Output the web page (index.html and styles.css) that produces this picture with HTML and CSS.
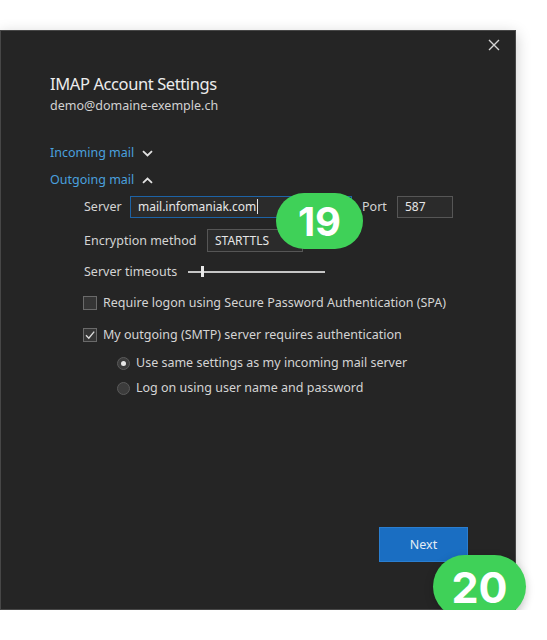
FILE: index.html
```html
<!DOCTYPE html>
<html lang="en">
<head>
    <meta charset="UTF-8">
    <meta name="viewport" content="width=device-width, initial-scale=1.0">
    <title>IMAP Account Settings</title>
    <link rel="stylesheet" href="styles.css">
</head>
<body>
    <div class="dialog">
        <button class="close" aria-label="Close">
            <svg width="12" height="12" viewBox="0 0 12 12">
                <path d="M1 1 L11 11 M11 1 L1 11" stroke="#d4d4d4" stroke-width="1.4" fill="none"/>
            </svg>
        </button>

        <div class="content">
            <h1 class="title">IMAP Account Settings</h1>
            <div class="email">demo@domaine-exemple.ch</div>

            <div class="toggle toggle-first">
                Incoming mail
                <svg width="11" height="7" viewBox="0 0 11 7"><path d="M1 1.2 L5.5 5.5 L10 1.2" stroke="#e2e2e2" stroke-width="1.8" fill="none"/></svg>
            </div>
            <div class="toggle">
                Outgoing mail
                <svg width="11" height="7" viewBox="0 0 11 7"><path d="M1 5.8 L5.5 1.5 L10 5.8" stroke="#e2e2e2" stroke-width="1.8" fill="none"/></svg>
            </div>

            <div class="fields">
                <div class="row row-server">
                    <span class="label label-server">Server</span>
                    <div class="field field-server">mail.infomaniak.com<span class="caret"></span></div>
                    <span class="label label-port">Port</span>
                    <div class="field field-port">587</div>
                </div>
                <div class="row row-enc">
                    <span class="label label-enc">Encryption method</span>
                    <div class="field field-select">STARTTLS</div>
                </div>
                <div class="row row-timeout">
                    <span class="label label-timeout">Server timeouts</span>
                    <div class="slider"><span class="thumb"></span></div>
                </div>

                <div class="check check-spa">
                    <span class="box"></span>
                    Require logon using Secure Password Authentication (SPA)
                </div>
                <div class="check check-auth">
                    <span class="box checked">
                        <svg width="12" height="12" viewBox="0 0 12 12"><path d="M2 6.3 L4.8 9.2 L10.2 2.6" stroke="#dcdcdc" stroke-width="1.4" fill="none"/></svg>
                    </span>
                    My outgoing (SMTP) server requires authentication
                </div>

                <div class="radios">
                    <div class="radio radio-first">
                        <span class="dot selected"></span>
                        Use same settings as my incoming mail server
                    </div>
                    <div class="radio">
                        <span class="dot"></span>
                        Log on using user name and password
                    </div>
                </div>
            </div>

            <div class="actions">
                <button class="btn-next">Next</button>
            </div>
        </div>

        <span class="badge badge-19">19</span>
        <span class="badge badge-20">20</span>
    </div>
</body>
</html>
```

FILE: styles.css
```css
body {
    margin: 0;
    background: #ffffff;
    font-family: "Noto Sans", "Open Sans", sans-serif;
    font-size: 12.5px;
    color: #d4d4d4;
}
.dialog {
    position: relative;
    box-sizing: border-box;
    width: 516px;
    height: 580px;
    margin-top: 30px;
    background: #252525;
    border: 1px solid #474747;
    box-shadow: 0 4px 14px rgba(0,0,0,0.22);
}
.close {
    position: absolute;
    top: 7px;
    right: 14px;
    width: 14px;
    height: 14px;
    padding: 1px;
    border: none;
    background: none;
}
.content {
    display: flex;
    flex-direction: column;
    height: 100%;
    box-sizing: border-box;
    padding: 41px 47px 47px 49px;
}
.title {
    margin: 0;
    font-size: 16.5px;
    letter-spacing: -0.4px;
    line-height: 24px;
    font-weight: normal;
    color: #ececec;
}
.email {
    margin-top: 1px;
    line-height: 18px;
    color: #d2d2d2;
}
.toggle {
    display: flex;
    align-items: center;
    gap: 8px;
    margin-top: 9px;
    line-height: 18px;
    font-size: 12.5px;
    color: #4aa0de;
}
.toggle-first {
    margin-top: 29px;
}
.fields {
    margin-top: 7px;
    padding-left: 34px;
}
.row {
    display: flex;
    align-items: center;
}
.row-enc {
    margin-top: 11px;
}
.row-timeout {
    margin-top: 11px;
    height: 18px;
}
.label {
    flex-shrink: 0;
    line-height: 18px;
}
.label-server { width: 46px; }
.label-port { width: 35px; margin-left: 10px; }
.label-enc { width: 123px; }
.label-timeout { width: 104px; }
.field {
    box-sizing: border-box;
    height: 22px;
    padding: 0 7px;
    font-size: 12px;
    line-height: 20px;
    background: #2b2b2b;
    border: 1px solid #565656;
    color: #e6e6e6;
}
.field-server {
    width: 222px;
    border-color: #1d63a6;
}
.caret {
    display: inline-block;
    width: 1px;
    height: 15px;
    margin-left: 1px;
    vertical-align: -3px;
    background: #e6e6e6;
}
.field-port {
    width: 56px;
}
.field-select {
    width: 96px;
    height: 23px;
    line-height: 21px;
}
.slider {
    position: relative;
    width: 137px;
    height: 2px;
    background: #c6c6c6;
}
.thumb {
    position: absolute;
    left: 13px;
    top: -5px;
    width: 3px;
    height: 11px;
    background: #e8e8e8;
}
.check {
    display: flex;
    align-items: center;
    gap: 6px;
    line-height: 18px;
    margin-top: 13px;
}
.check-auth {
    margin-top: 14px;
}
.box {
    box-sizing: border-box;
    width: 14px;
    height: 14px;
    margin-left: -1px;
    background: #353535;
    border: 1px solid #6a6a6a;
    display: flex;
    align-items: center;
    justify-content: center;
}
.radios {
    padding-left: 33px;
}
.radio {
    display: flex;
    align-items: center;
    gap: 6px;
    line-height: 18px;
    margin-top: 7px;
}
.radio-first {
    margin-top: 10px;
}
.dot {
    box-sizing: border-box;
    width: 13px;
    height: 13px;
    border-radius: 50%;
    background: #3c3c3c;
    border: 1px solid #5a5a5a;
    display: flex;
    align-items: center;
    justify-content: center;
}
.dot.selected::after {
    content: "";
    width: 5px;
    height: 5px;
    border-radius: 50%;
    background: #e8e8e8;
}
.actions {
    margin-top: auto;
    display: flex;
    justify-content: flex-end;
}
.btn-next {
    width: 89px;
    height: 35px;
    background: #1a6ec2;
    border: 1px solid #2a7ed0;
    color: #e4ecf5;
    font-family: inherit;
    font-size: 12.5px;
}
.badge {
    position: absolute;
    display: flex;
    align-items: center;
    justify-content: center;
    background: #3fd158;
    color: #ffffff;
    font-family: Inter, "Noto Sans", sans-serif;
    font-weight: 700;
}
.badge-19 {
    left: 275px;
    top: 162px;
    width: 87px;
    height: 56px;
    border-radius: 28px;
    font-size: 40px;
}
.badge-20 {
    left: 432px;
    top: 524px;
    width: 93px;
    height: 63px;
    border-radius: 32px;
    font-size: 43px;
    box-shadow: 0 3px 10px rgba(0,0,0,0.18);
}
```
